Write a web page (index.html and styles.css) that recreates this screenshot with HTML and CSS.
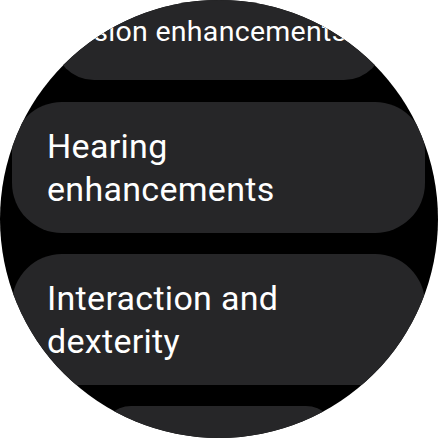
FILE: index.html
```html
<!DOCTYPE html>
<html lang="en">
<head>
<meta charset="utf-8">
<title>Accessibility</title>
<link rel="stylesheet" href="styles.css">
</head>
<body>
<div class="screen">
  <div class="list">
    <div class="chip chip-top"><span class="label">Vision enhancements</span></div>
    <div class="chip"><span class="label">Hearing enhancements</span></div>
    <div class="chip"><span class="label">Interaction and dexterity</span></div>
    <div class="chip chip-bottom"><span class="label">Text-to-speech</span></div>
  </div>
</div>
</body>
</html>
```
FILE: styles.css
```css
html, body {
  margin: 0;
  padding: 0;
  background: #ffffff;
}
body {
  width: 438px;
  height: 438px;
  overflow: hidden;
  font-family: Roboto, "Liberation Sans", sans-serif;
}
.screen {
  width: 438px;
  height: 438px;
  border-radius: 50%;
  background: #000000;
  overflow: hidden;
}
.list {
  display: flex;
  flex-direction: column;
  align-items: center;
  gap: 21px;
  margin-top: -25px;
}
.chip {
  box-sizing: border-box;
  width: 413px;
  height: 131px;
  margin-left: -1px;
  border-radius: 50px;
  background: #262628;
  color: #ffffff;
  padding: 0 80px 0 35px;
  display: flex;
  align-items: center;
  font-size: 34px;
  line-height: 42.5px;
  letter-spacing: 0.3px;
}
.chip-top {
  width: 330px;
  height: 105px;
  margin-bottom: 1px;
  border-radius: 40px;
  align-items: flex-start;
  padding: 39px 10px 0 14px;
  font-size: 28.5px;
  line-height: 35px;
  letter-spacing: 0.3px;
  white-space: nowrap;
}
.chip-bottom {
  width: 235px;
  height: 75px;
  border-radius: 30px;
  font-size: 19px;
  line-height: 24px;
  padding: 12px 12px 0 40px;
  white-space: nowrap;
}
```
